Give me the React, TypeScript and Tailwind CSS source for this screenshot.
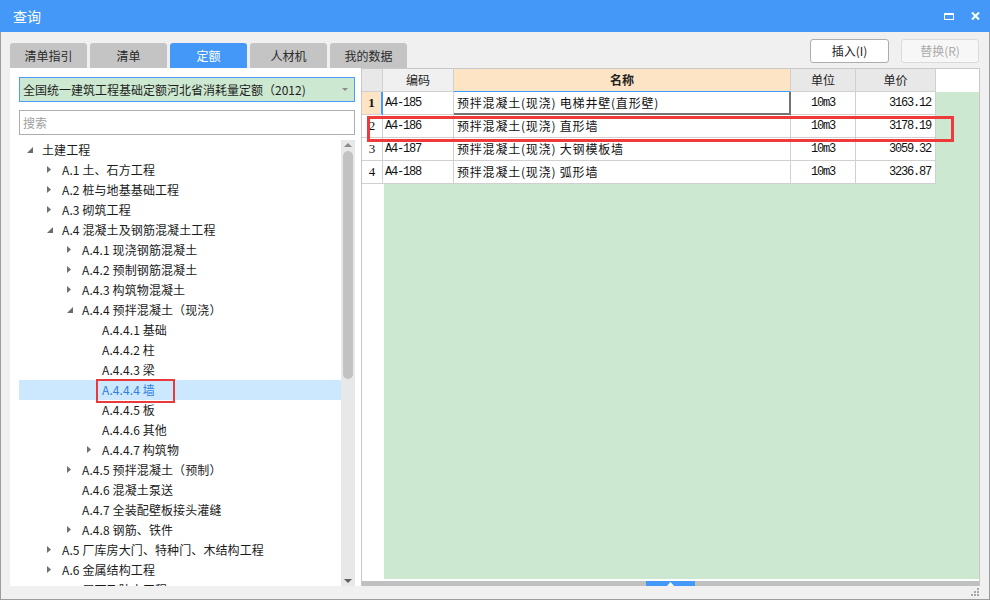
import React from 'react';

const SANS = "font-['Noto_Sans_CJK_SC','Noto_Sans',sans-serif]";
const MONO = "font-['Liberation_Mono','Noto_Sans_CJK_SC',monospace]";
const SERIF = "font-['Liberation_Serif',serif]";

type Node = { l: number; t: string; s?: 'open' | 'closed'; sel?: boolean };

const TREE: Node[] = [
  { l: 0, t: '土建工程', s: 'open' },
  { l: 1, t: 'A.1 土、石方工程', s: 'closed' },
  { l: 1, t: 'A.2 桩与地基基础工程', s: 'closed' },
  { l: 1, t: 'A.3 砌筑工程', s: 'closed' },
  { l: 1, t: 'A.4 混凝土及钢筋混凝土工程', s: 'open' },
  { l: 2, t: 'A.4.1 现浇钢筋混凝土', s: 'closed' },
  { l: 2, t: 'A.4.2 预制钢筋混凝土', s: 'closed' },
  { l: 2, t: 'A.4.3 构筑物混凝土', s: 'closed' },
  { l: 2, t: 'A.4.4 预拌混凝土（现浇）', s: 'open' },
  { l: 3, t: 'A.4.4.1 基础' },
  { l: 3, t: 'A.4.4.2 柱' },
  { l: 3, t: 'A.4.4.3 梁' },
  { l: 3, t: 'A.4.4.4 墙', sel: true },
  { l: 3, t: 'A.4.4.5 板' },
  { l: 3, t: 'A.4.4.6 其他' },
  { l: 3, t: 'A.4.4.7 构筑物', s: 'closed' },
  { l: 2, t: 'A.4.5 预拌混凝土（预制）', s: 'closed' },
  { l: 2, t: 'A.4.6 混凝土泵送' },
  { l: 2, t: 'A.4.7 全装配壁板接头灌缝' },
  { l: 2, t: 'A.4.8 钢筋、铁件', s: 'closed' },
  { l: 1, t: 'A.5 厂库房大门、特种门、木结构工程', s: 'closed' },
  { l: 1, t: 'A.6 金属结构工程', s: 'closed' },
  { l: 1, t: 'A.7 屋面及防水工程', s: 'closed' },
];

const ROWS = [
  ['A4-185', '预拌混凝土(现浇) 电梯井壁(直形壁)', '10m3', '3163.12'],
  ['A4-186', '预拌混凝土(现浇) 直形墙', '10m3', '3178.19'],
  ['A4-187', '预拌混凝土(现浇) 大钢模板墙', '10m3', '3059.32'],
  ['A4-188', '预拌混凝土(现浇) 弧形墙', '10m3', '3236.87'],
];

const TABS = ['清单指引', '清单', '定额', '人材机', '我的数据'];

const Arrow = ({ s }: { s?: 'open' | 'closed' }) => {
  if (s === 'open')
    return (
      <svg width="7" height="7" viewBox="0 0 7 7" className="ml-[8px]">
        <polygon points="6,0 6,6 0,6" fill="#6b6b6b" />
      </svg>
    );
  if (s === 'closed')
    return (
      <svg width="5" height="8" viewBox="0 0 5 8" className="ml-[8px]">
        <polygon points="0,0 4,3.5 0,7" fill="#707070" />
      </svg>
    );
  return null;
};

const TreeRow = ({ node }: { node: Node }) => (
  <div
    className={`relative flex h-[20px] shrink-0 items-center ${node.sel ? 'bg-[#cce8ff]' : ''}`}
    style={{ paddingLeft: node.l * 20 }}
  >
    <div className="flex w-[23px] shrink-0 items-center">
      <Arrow s={node.s} />
    </div>
    <span className={`whitespace-nowrap text-[12px] tracking-[0.1px] ${node.sel ? 'text-[#2f7ee0]' : 'text-[#1b1b1b]'}`}>
      {node.t}
    </span>
    {node.sel && (
      <div className="absolute left-[77px] top-[-1px] h-[24px] w-[79px] border-2 border-[#e83a3a]" />
    )}
  </div>
);

const App: React.FC = () => {
  return (
    <div className={`flex h-[600px] w-[990px] flex-col bg-[#f0f0f0] ${SANS}`}>
      {/* Title bar */}
      <div className="flex h-[32px] shrink-0 items-center justify-between bg-[#4499f8] pl-[13px] pr-[10px]">
        <span className="text-[14px] text-white">查询</span>
        <div className="flex items-center gap-[17px]">
          <div className="h-[7px] w-[10px] border-[1.5px] border-t-[2.5px] border-white" />
          <svg width="9" height="8" viewBox="0 0 9 8">
            <path d="M1 0.5 L8 7.5 M8 0.5 L1 7.5" stroke="white" strokeWidth="2" />
          </svg>
        </div>
      </div>

      {/* Body */}
      <div className="flex flex-1 flex-col border-x border-b border-[#9c9c9c] px-[9px]">
        {/* Tabs + buttons */}
        <div className="flex h-[36px] shrink-0 justify-between">
          <div className="flex items-end gap-[3px]">
            {TABS.map((t, i) => (
              <div
                key={t}
                className={`flex h-[25px] w-[77px] items-center justify-center rounded-t-[3px] text-[12px] ${
                  i === 2 ? 'bg-[#4499f8] text-white' : 'bg-[#c4c4c4] text-[#2a2a2a]'
                }`}
              >
                {t}
              </div>
            ))}
          </div>
          <div className="flex gap-[12px] pr-[1px] pt-[7px]">
            <button className="flex h-[24px] w-[79px] items-center justify-center rounded-[3px] border border-[#adadad] bg-white text-[12px] text-[#222]">
              插入(I)
            </button>
            <button className="flex h-[24px] w-[78px] items-center justify-center rounded-[3px] border border-[#dadada] bg-[#f7f7f7] text-[12px] text-[#ababab]">
              替换(R)
            </button>
          </div>
        </div>

        {/* Main */}
        <div className="flex h-[518px] shrink-0">
          {/* Left panel */}
          <div className="flex w-[351px] shrink-0 flex-col bg-white pl-[9px] pr-[6px] pt-[9px]">
            <div className="flex h-[25px] shrink-0 items-center justify-between border border-[#4a9dff] bg-[#cde8d0] pl-[3px] pr-[6px]">
              <span className="whitespace-nowrap text-[12px] text-[#1e1e1e]">
                全国统一建筑工程基础定额河北省消耗量定额（2012)
              </span>
              <svg width="6" height="3" viewBox="0 0 6 3">
                <polygon points="0,0 6,0 3,3" fill="#8c8c8c" />
              </svg>
            </div>
            <div className="mt-[8px] flex h-[25px] shrink-0 items-center border border-[#abadb3] pl-[3px]">
              <span className="text-[12px] text-[#a0a0a0]">搜索</span>
            </div>
            <div className="mt-[5px] flex min-h-0 flex-1">
              <div className="flex min-w-0 flex-1 flex-col overflow-hidden">
                {TREE.map((n) => (
                  <TreeRow key={n.t} node={n} />
                ))}
              </div>
              {/* vertical scrollbar */}
              <div className="flex w-[14px] shrink-0 flex-col items-center bg-[#e8e8e8]">
                <svg width="8" height="4" viewBox="0 0 8 4" className="mt-[3px]">
                  <polygon points="0,4 8,4 4,0" fill="#8a8a8a" />
                </svg>
                <div className="mt-[4px] h-[228px] w-[10px] rounded-full bg-[#c2c2c2]" />
                <div className="flex-1" />
                <svg width="8" height="4" viewBox="0 0 8 4" className="mb-[3px]">
                  <polygon points="0,0 8,0 4,4" fill="#606060" />
                </svg>
              </div>
            </div>
          </div>

          {/* Right panel */}
          <div className="relative flex w-[619px] shrink-0 flex-col border-x border-t border-[#c8c8c8] bg-white">
            {/* header */}
            <div className="flex h-[23px] shrink-0 text-[12px] text-[#222]">
              <div className="w-[21px] border-b border-r border-[#d0d0d0] bg-[#e8e8e8]" />
              <div className="flex w-[71px] items-center justify-center border-b border-r border-[#d0d0d0] bg-[#f0f0f0]">
                编码
              </div>
              <div className="flex w-[337px] items-center justify-center border-b border-r border-b-[#3c9cff] border-r-[#d0d0d0] bg-[#fde4c4] font-bold">
                名称
              </div>
              <div className="flex w-[65px] items-center justify-center border-b border-r border-[#d0d0d0] bg-[#e8e8e8]">
                单位
              </div>
              <div className="flex w-[80px] items-center justify-center border-b border-r border-[#d0d0d0] bg-[#e8e8e8]">
                单价
              </div>
              <div className="flex-1 bg-white" />
            </div>

            {/* rows */}
            {ROWS.map((r, i) => (
              <div key={r[0]} className="flex h-[23px] shrink-0 text-[12px] text-[#111]">
                <div
                  className={`flex w-[21px] items-center justify-center border-b border-[#d0d0d0] ${SERIF} text-[13px] ${
                    i === 0 ? 'border-r-2 border-r-[#3c9cff] bg-[#fde4c4] font-bold' : 'border-r bg-white'
                  }`}
                >
                  {i + 1}
                </div>
                <div className={`flex w-[71px] items-center border-b border-r border-[#d0d0d0] bg-white pl-[2px] ${MONO} tracking-[-1.2px]`}>
                  {r[0]}
                </div>
                <div
                  className={`flex w-[337px] items-center bg-white pl-[3px] tracking-[0.8px] ${
                    i === 0 ? 'border-b-2 border-r-2 border-[#747474]' : 'border-b border-r border-[#d0d0d0]'
                  }`}
                >
                  {r[1]}
                </div>
                <div className={`flex w-[65px] items-center justify-center border-b border-r border-[#d0d0d0] bg-white ${MONO} tracking-[-1.2px]`}>
                  {r[2]}
                </div>
                <div className={`flex w-[80px] items-center justify-end border-b border-r border-[#d0d0d0] bg-white pr-[4px] ${MONO} tracking-[-1.2px]`}>
                  {r[3]}
                </div>
                <div className="flex-1 bg-[#cde8d0]" />
              </div>
            ))}

            {/* empty area */}
            <div className="flex min-h-0 flex-1">
              <div className="w-[22px] bg-white" />
              <div className="flex-1 bg-[#cde8d0]" />
            </div>
            <div className="mt-[2px] flex h-[5px] shrink-0 bg-[#c0c0c0]">
              <div className="w-[284px]" />
              <div className="flex w-[49px] items-center justify-center bg-[#4499f8]">
                <svg width="7" height="4" viewBox="0 0 7 4">
                  <polygon points="0,4 7,4 3.5,0" fill="white" />
                </svg>
              </div>
            </div>

            {/* annotation box */}
            <div className="absolute left-[5px] top-[47px] h-[26px] w-[587px] border-[3px] border-[#ee3a3a]" />
          </div>
        </div>

        {/* Bottom strip with resize grip */}
        <div className="flex flex-1 items-end justify-end pb-[2px]">
          <svg width="9" height="9" viewBox="0 0 9 9">
            <rect x="6" y="0" width="2" height="2" fill="#a8a8a8" />
            <rect x="3" y="3" width="2" height="2" fill="#a8a8a8" />
            <rect x="6" y="3" width="2" height="2" fill="#a8a8a8" />
            <rect x="0" y="6" width="2" height="2" fill="#a8a8a8" />
            <rect x="3" y="6" width="2" height="2" fill="#a8a8a8" />
            <rect x="6" y="6" width="2" height="2" fill="#a8a8a8" />
          </svg>
        </div>
      </div>
    </div>
  );
};

export default App;
